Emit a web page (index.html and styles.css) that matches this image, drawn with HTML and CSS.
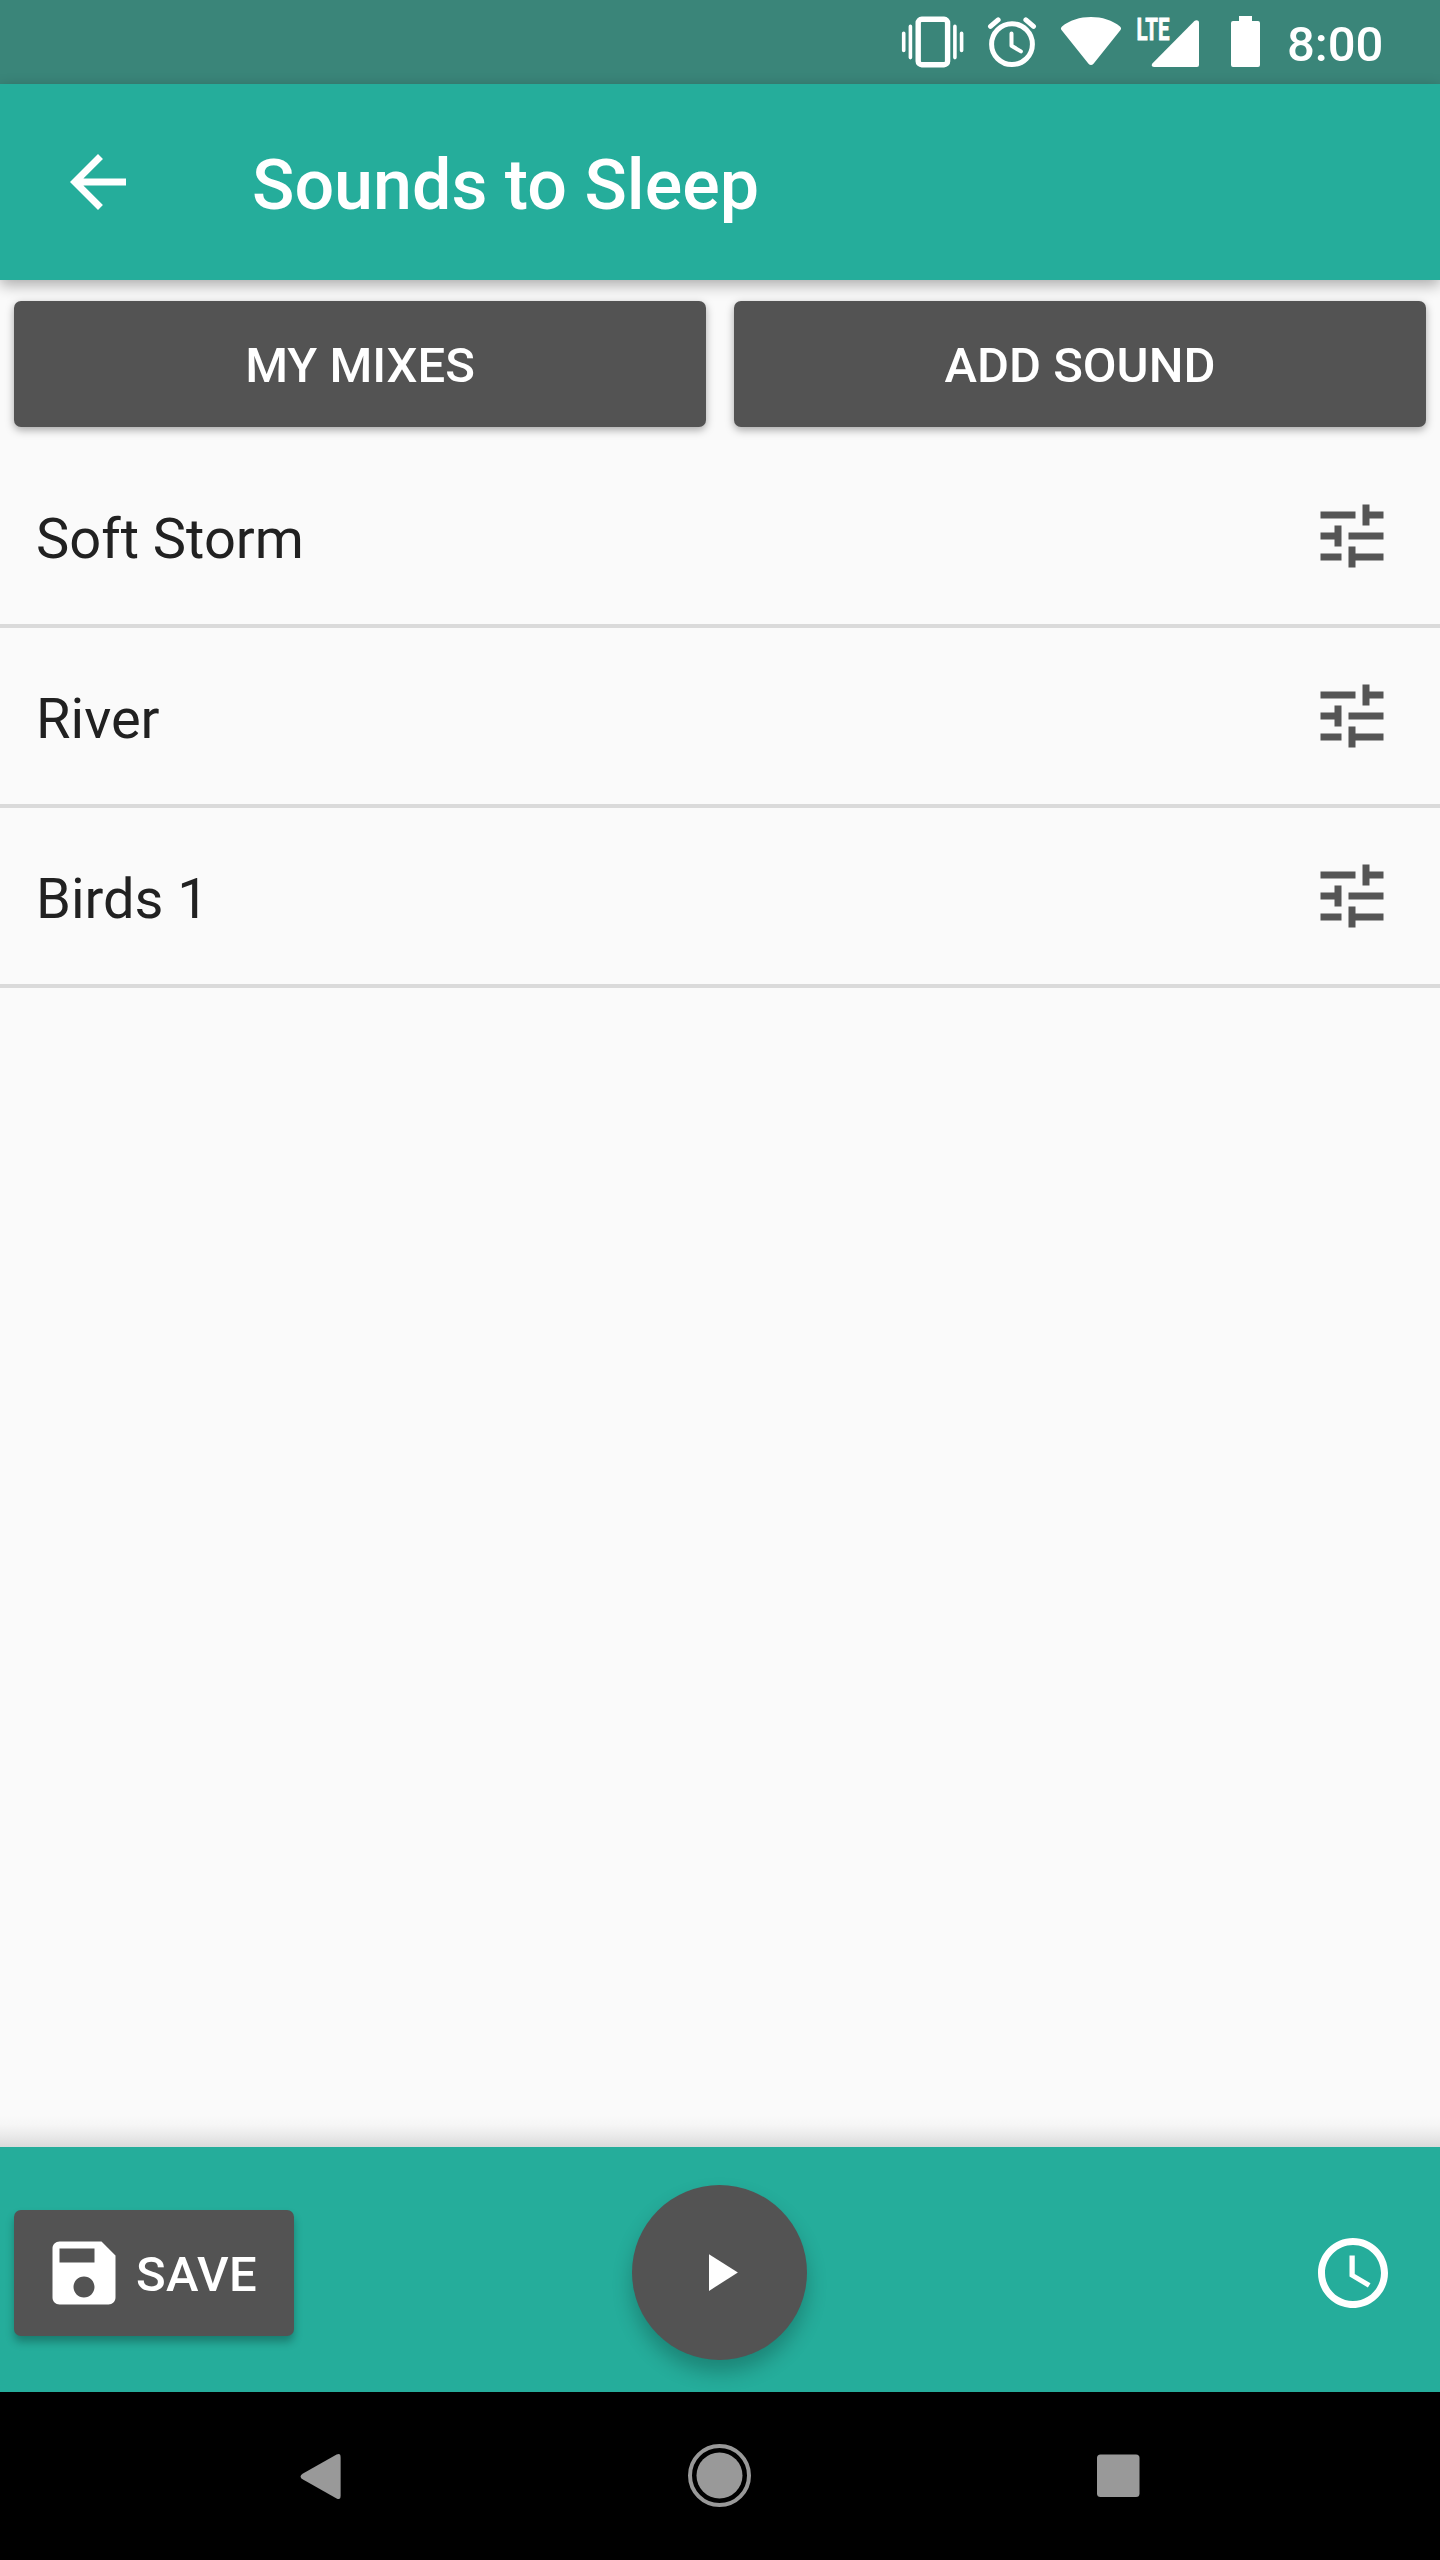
FILE: index.html
```html
<!DOCTYPE html>
<html lang="en">
<head>
<meta charset="utf-8">
<title>Sounds to Sleep</title>
<link rel="stylesheet" href="styles.css">
</head>
<body>
<div class="screen">
  <div class="status-bar">
    <svg class="status-icons" width="390" height="84" viewBox="890 0 390 84" aria-hidden="true">
      <g fill="none" stroke="#fff" stroke-linecap="round">
        <rect x="918.2" y="19.3" width="29.4" height="45.400" rx="3.5" stroke-width="5.400"/>
        <path d="M903.7 33.2v17.3M910.4 26.4v31.2M954.9 26.4v31.2M961.6 33.2v17.3" stroke-width="3.6"/>
        <circle cx="1012" cy="44.2" r="20.4" stroke-width="5"/>
        <path d="M1011.500 33.5v12.3l9.4 5.6" stroke-width="4" stroke-linejoin="round"/>
        <path d="M990.5 26.3l7.6-6.4M1033.5 26.3l-7.6-6.4" stroke-width="5"/>
      </g>
      <g fill="#fff">
        <path d="M1062 26.6c14.5-12.8 43.5-12.8 58 0 1.300 1.200 1.400 2.300.5 3.500l-27 33.700c-1.500 1.700-3.500 1.700-5 0l-27-33.700c-.9-1.200-.8-2.300.5-3.500z"/>
        <path d="M1199 22.500v42.500q0 2-2 2h-43c-2.600 0-2.800-2.200-1.400-3.700l41.800-42.200c1.500-1.500 4.600-1.200 4.600 1.400z"/>
        <path d="M1239 16h13v5h6q2 0 2 2v42q0 2-2 2h-25q-2 0-2-2v-42q0-2 2-2h6z"/>
      </g>
      <text class="lte" x="1136.500" y="39.700" textLength="33" lengthAdjust="spacingAndGlyphs">LTE</text>
    </svg>
    <span class="time">8:00</span>
  </div>

  <header class="app-bar">
    <svg class="icon" viewBox="0 0 24 24"><path d="M20 11H7.830l5.590-5.590L12 4l-8 8 8 8 1.410-1.410L7.830 13H20v-2z"/></svg>
    <h1 class="title">Sounds to Sleep</h1>
  </header>

  <main class="content">
    <div class="actions">
      <button class="button">MY MIXES</button>
      <button class="button">ADD SOUND</button>
    </div>
    <ul class="sounds">
      <li class="sound"><span>Soft Storm</span><svg class="icon" viewBox="0 0 24 24"><path d="M3 17v2h6v-2H3zM3 5v2h10V5H3zm10 16v-2h8v-2h-8v-2h-2v6h2zM7 9v2H3v2h4v2h2V9H7zm14 4v-2H11v2h10zm-6-4h2V7h4V5h-4V3h-2v6z"/></svg></li>
      <li class="sound"><span>River</span><svg class="icon" viewBox="0 0 24 24"><path d="M3 17v2h6v-2H3zM3 5v2h10V5H3zm10 16v-2h8v-2h-8v-2h-2v6h2zM7 9v2H3v2h4v2h2V9H7zm14 4v-2H11v2h10zm-6-4h2V7h4V5h-4V3h-2v6z"/></svg></li>
      <li class="sound"><span>Birds 1</span><svg class="icon" viewBox="0 0 24 24"><path d="M3 17v2h6v-2H3zM3 5v2h10V5H3zm10 16v-2h8v-2h-8v-2h-2v6h2zM7 9v2H3v2h4v2h2V9H7zm14 4v-2H11v2h10zm-6-4h2V7h4V5h-4V3h-2v6z"/></svg></li>
    </ul>
  </main>

  <footer class="player">
    <button class="button save">
      <svg class="icon" viewBox="0 0 24 24"><path fill-rule="evenodd" d="M17 3H5c-1.110 0-2 .9-2 2v14c0 1.100.89 2 2 2h14c1.100 0 2-.9 2-2V7l-4-4zm-5 16c-1.660 0-3-1.340-3-3s1.340-3 3-3 3 1.340 3 3-1.340 3-3 3zm3-10H5V5h10v4z"/></svg>
      <span>SAVE</span>
    </button>
    <button class="play" aria-label="Play"><svg class="play-icon" viewBox="0 0 24 24"><path d="M8 5v14l11-7z"/></svg></button>
    <svg class="icon timer" viewBox="0 0 24 24"><path d="M11.990 2C6.470 2 2 6.480 2 12s4.470 10 9.990 10C17.520 22 22 17.520 22 12S17.520 2 11.990 2zM12 20c-4.420 0-8-3.580-8-8s3.580-8 8-8 8 3.580 8 8-3.580 8-8 8z"/><path d="M12.500 7H11v6l5.250 3.150.75-1.230-4.500-2.670z"/></svg>
  </footer>

  <nav class="nav-bar">
    <svg viewBox="0 0 84 84"><path d="M61.600 23.200v38.600q0 4.600-4 2.600L24 45.600q-5-3.100 0-6.200L57.600 20.600q4-2 4 2.600z"/></svg>
    <svg viewBox="0 0 84 84"><circle cx="41.500" cy="41.500" r="23"/><circle class="ring" cx="41.500" cy="41.500" r="29.500"/></svg>
    <svg viewBox="0 0 84 84"><rect x="20" y="20.500" width="42.500" height="42.500" rx="3.500"/></svg>
  </nav>
</div>
</body>
</html>
```
FILE: styles.css
```css
* {
  box-sizing: border-box;
}

body {
  margin: 0;
  font-family: Roboto, "Liberation Sans", sans-serif;
  background: #fafafa;
}

.screen {
  display: flex;
  flex-direction: column;
  width: 1440px;
  height: 2560px;
  overflow: hidden;
}

.icon {
  display: block;
  flex: none;
  width: 84px;
  height: 84px;
  fill: currentColor;
}

.status-bar {
  display: flex;
  flex: none;
  align-items: center;
  justify-content: flex-end;
  gap: 7px;
  height: 84px;
  padding-right: 56px;
  background: #3a8579;
  color: #fff;
}

.status-icons {
  display: block;
}

.lte {
  fill: #fff;
  stroke: #fff;
  stroke-width: 0.8px;
  font-size: 31px;
  font-weight: 700;
}

.time {
  width: 97px;
  padding-top: 5px;
  font-size: 49px;
  font-weight: 500;
  line-height: 56px;
}

.app-bar {
  position: relative;
  display: flex;
  flex: none;
  align-items: center;
  gap: 112px;
  height: 196px;
  padding: 0 56px;
  background: #25ad9b;
  color: #fff;
  box-shadow: 0 5px 14px rgba(0, 0, 0, 0.32);
}

.title {
  margin: 0;
  padding-top: 6px;
  font-size: 70px;
  font-weight: 500;
  line-height: 82px;
}

.content {
  flex: 1;
  background: linear-gradient(to top, #dadada, #ebebeb 12px, #f6f6f6 22px, #fafafa 32px) bottom / 100% 32px no-repeat;
}

.actions {
  display: grid;
  grid-template-columns: 1fr 1fr;
  gap: 28px;
  padding: 21px 14px;
}

.button {
  height: 126px;
  padding: 4px 0 0;
  border: 0;
  border-radius: 7px;
  background: #535353;
  color: #fff;
  font: 500 49px/58px Roboto, "Liberation Sans", sans-serif;
  box-shadow: 0 3px 8px rgba(0, 0, 0, 0.34);
}

.sounds {
  margin: 0;
  padding: 0;
  list-style: none;
}

.sound {
  display: flex;
  align-items: center;
  justify-content: space-between;
  height: 180px;
  padding: 0 46px 0 36px;
  border-bottom: 4px solid #dadada;
  color: #212121;
  font-size: 56px;
  line-height: 66px;
}

.sound span {
  padding-top: 6px;
}

.sound .icon {
  color: #555;
}

.player {
  display: grid;
  flex: none;
  grid-template-columns: 1fr 175px 1fr;
  align-items: center;
  height: 245px;
  padding: 6px 15px 0 14px;
  background: #25ad9b;
  color: #fff;
}

.save {
  display: flex;
  align-items: center;
  gap: 10px;
  width: 280px;
  padding: 0 28px;
  box-shadow: 0 6px 9px rgba(0, 0, 0, 0.28);
}

.save span {
  padding-top: 4px;
  letter-spacing: 0.4px;
}

.play {
  display: flex;
  align-items: center;
  justify-content: center;
  width: 175px;
  height: 175px;
  padding: 0;
  border: 0;
  border-radius: 50%;
  background: #535353;
  color: #fff;
  box-shadow: 0 12px 20px rgba(0, 0, 0, 0.24);
}

.play-icon {
  width: 63px;
  height: 63px;
  fill: currentColor;
}

.timer {
  justify-self: end;
  margin-right: 30px;
}

.nav-bar {
  display: flex;
  flex: none;
  align-items: center;
  justify-content: center;
  gap: 315px;
  height: 168px;
  background: #000;
}

.nav-bar svg {
  width: 84px;
  height: 84px;
  fill: #999;
}

.nav-bar .ring {
  fill: none;
  stroke: #999;
  stroke-width: 4;
}
```
